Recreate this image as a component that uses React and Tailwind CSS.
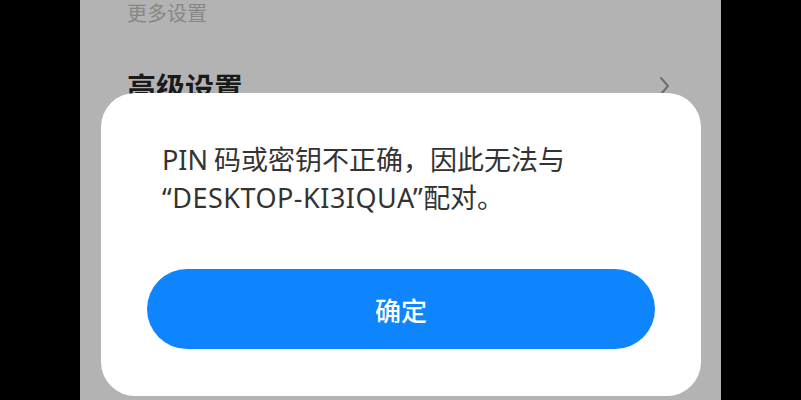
export default function App() {
  return (
    <div
      className="flex h-[400px] w-[801px] overflow-hidden bg-black"
      style={{ fontFamily: '"Noto Sans CJK SC", "Noto Sans", sans-serif' }}
    >
      <div className="w-[80px] shrink-0 bg-black" />
      <div className="relative h-[400px] w-[641px] shrink-0 bg-[#b3b3b3]">
        <div className="pl-[47px] pt-[1px]">
          <p className="text-[20px] leading-[24px] text-[#878787]">更多设置</p>
          <div className="mt-[43px] flex items-center justify-between pr-[50px]">
            <p className="text-[29px] font-bold leading-[36px] text-[#1a1a1a]">高级设置</p>
            <svg className="h-[20px] w-[12px]" viewBox="0 0 12 20" fill="none">
              <path d="M2 2 L9 10 L2 18" stroke="#6e6e6e" strokeWidth="2" strokeLinecap="round" strokeLinejoin="round" />
            </svg>
          </div>
        </div>

        <div className="absolute left-[21px] top-[93px] h-[303px] w-[600px] rounded-[34px] bg-white px-[46px] pt-[47px]">
          <p className="pl-[15px] text-[27px] leading-[37px] text-[#333333]">
            <span className="font-['Noto_Sans']">PIN</span> 码或密钥不正确，因此无法与
            <br />
            <span className="font-['Noto_Sans'] tracking-[0.5px]">“DESKTOP-KI3IQUA”</span>配对。
          </p>
          <button className="mt-[53px] flex h-[80px] w-full items-center justify-center rounded-full bg-[#0e84fe] text-[26px] font-medium text-white">
            确定
          </button>
        </div>
      </div>
      <div className="flex-1 bg-black" />
    </div>
  )
}
